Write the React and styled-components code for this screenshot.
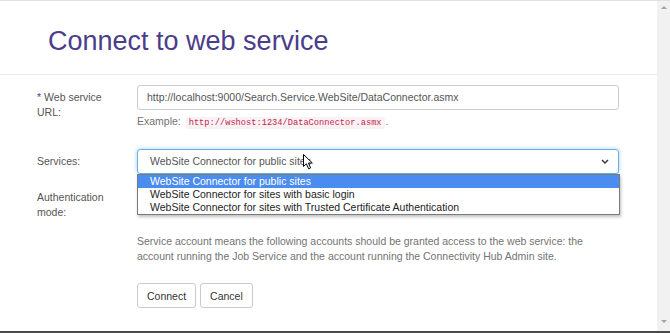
import styled, { createGlobalStyle } from "styled-components";

const GlobalStyle = createGlobalStyle`
  html, body {
    margin: 0;
    padding: 0;
    background: #fff;
  }
  body {
    font-family: "Liberation Sans", Arial, sans-serif;
    font-size: 10.5px;
    line-height: 15px;
    color: #555;
  }
`;

const Page = styled.div`
  width: 670px;
  height: 333px;
  display: flex;
  flex-direction: column;
  overflow: hidden;
`;

const Window = styled.div`
  flex: 1;
  display: flex;
  flex-direction: row;
  border-top: 1px solid #e2e2e2;
  min-height: 0;
`;

const Main = styled.div`
  flex: 1;
  display: flex;
  flex-direction: column;
  position: relative;
`;

const Header = styled.div`
  height: 48px;
  padding: 25px 0 0 48px;
  border-bottom: 1px solid #ebebeb;
`;

const Title = styled.h1`
  margin: 0;
  font-size: 27px;
  line-height: 30px;
  font-weight: normal;
  color: #4a3d8a;
`;

const Form = styled.div`
  display: grid;
  grid-template-columns: 100px 482px;
  row-gap: 11px;
  padding: 10px 0 0 37px;
`;

const Label = styled.div`
  padding: 5px 14px 0 0;
  color: #555;
  line-height: 15px;
`;

const Required = styled.span`
  color: #4a3d8a;
  margin-right: 3px;
`;

const Field = styled.div`
  position: relative;
  display: flex;
  flex-direction: column;
`;

const Input = styled.div`
  box-sizing: border-box;
  height: 25px;
  padding: 4px 9px;
  border: 1px solid #ccc;
  border-radius: 3px;
  color: #555;
  line-height: 15px;
  white-space: nowrap;
`;

const SelectBox = styled.div`
  box-sizing: border-box;
  height: 25px;
  padding: 4px 9px 4px 12px;
  border: 1px solid ${(p) => (p.$focused ? "#66afe9" : "#ccc")};
  border-radius: 3px;
  box-shadow: ${(p) =>
    p.$focused ? "0 0 4px rgba(102, 175, 233, 0.6)" : "none"};
  display: flex;
  align-items: center;
  justify-content: space-between;
  color: #555;
`;

const Help = styled.div`
  margin: 4px 0 7px;
  color: #737373;
`;

const Code = styled.code`
  font-family: "Liberation Mono", Consolas, monospace;
  font-size: 8.7px;
  padding: 1px 3px;
  margin: 0 1px 0 2px;
  color: #c7254e;
  background: #f9f2f4;
  border-radius: 3px;
`;

const Dropdown = styled.div`
  position: absolute;
  top: 25px;
  left: 0;
  right: -1px;
  z-index: 2;
  background: #fff;
  border: 1px solid #7a7a7a;
  box-shadow: 1px 2px 3px rgba(0, 0, 0, 0.25);
`;

const Option = styled.div`
  height: 13px;
  line-height: 13px;
  padding-left: 12px;
  color: ${(p) => (p.$active ? "#fff" : "#222")};
  background: ${(p) => (p.$active ? "#4a8cf0" : "#fff")};
  white-space: nowrap;
`;

const Note = styled.p`
  margin: 24px 0 0;
  color: #737373;
  line-height: 15px;
`;

const Actions = styled.div`
  margin-top: 19px;
  display: flex;
  gap: 4px;
`;

const Button = styled.button`
  box-sizing: border-box;
  height: 25px;
  padding: 0 9px;
  border: 1px solid #ccc;
  border-radius: 3px;
  background: #fff;
  color: #333;
  font-family: "Liberation Sans", Arial, sans-serif;
  font-size: 10.5px;
`;

const Cursor = styled.svg`
  position: absolute;
  left: 303px;
  top: 153px;
  z-index: 3;
`;

const Scrollbar = styled.div`
  width: 13px;
  background: #f1f1f1;
  display: flex;
  flex-direction: column;
  justify-content: space-between;
  align-items: center;
  padding: 5px 0 8px;
`;

const Arrow = styled.div`
  width: 0;
  height: 0;
  border-left: 3px solid transparent;
  border-right: 3px solid transparent;
  ${(p) =>
    p.$down
      ? "border-top: 3px solid #a3a3a3;"
      : "border-bottom: 3px solid #a3a3a3;"}
`;

const BottomBar = styled.div`
  height: 2px;
  background: #4a4a4a;
`;

const options = [
  "WebSite Connector for public sites",
  "WebSite Connector for sites with basic login",
  "WebSite Connector for sites with Trusted Certificate Authentication",
];

function Chevron() {
  return (
    <svg width="8" height="5" viewBox="0 0 8 5">
      <path d="M1 1 L4 4 L7 1" fill="none" stroke="#333" strokeWidth="1.4" />
    </svg>
  );
}

export default function App() {
  return (
    <Page>
      <GlobalStyle />
      <Window>
        <Main>
          <Header>
            <Title>Connect to web service</Title>
          </Header>
          <Form>
            <Label>
              <Required>*</Required>Web service URL:
            </Label>
            <Field>
              <Input>http://localhost:9000/Search.Service.WebSite/DataConnector.asmx</Input>
              <Help>
                Example: <Code>http://wshost:1234/DataConnector.asmx</Code>.
              </Help>
            </Field>

            <Label>Services:</Label>
            <Field>
              <SelectBox $focused>
                <span>WebSite Connector for public sites</span>
                <Chevron />
              </SelectBox>
              <Dropdown>
                {options.map((o, i) => (
                  <Option key={o} $active={i === 0}>
                    {o}
                  </Option>
                ))}
              </Dropdown>
            </Field>

            <Label>Authentication mode:</Label>
            <Field>
              <SelectBox>
                <span />
                <Chevron />
              </SelectBox>
              <Note>
                Service account means the following accounts should be granted access to the
                web service: the account running the Job Service and the account running the
                Connectivity Hub Admin site.
              </Note>
              <Actions>
                <Button>Connect</Button>
                <Button>Cancel</Button>
              </Actions>
            </Field>
          </Form>
          <Cursor width="11" height="16" viewBox="0 0 11 16">
            <path
              d="M0.5 0.5 L0.5 12.5 L3.4 9.8 L5.6 14.8 L7.6 13.9 L5.4 9 L9.3 9 Z"
              fill="#fff"
              stroke="#000"
              strokeWidth="1"
              strokeLinejoin="round"
            />
          </Cursor>
        </Main>
        <Scrollbar>
          <Arrow />
          <Arrow $down />
        </Scrollbar>
      </Window>
      <BottomBar />
    </Page>
  );
}
